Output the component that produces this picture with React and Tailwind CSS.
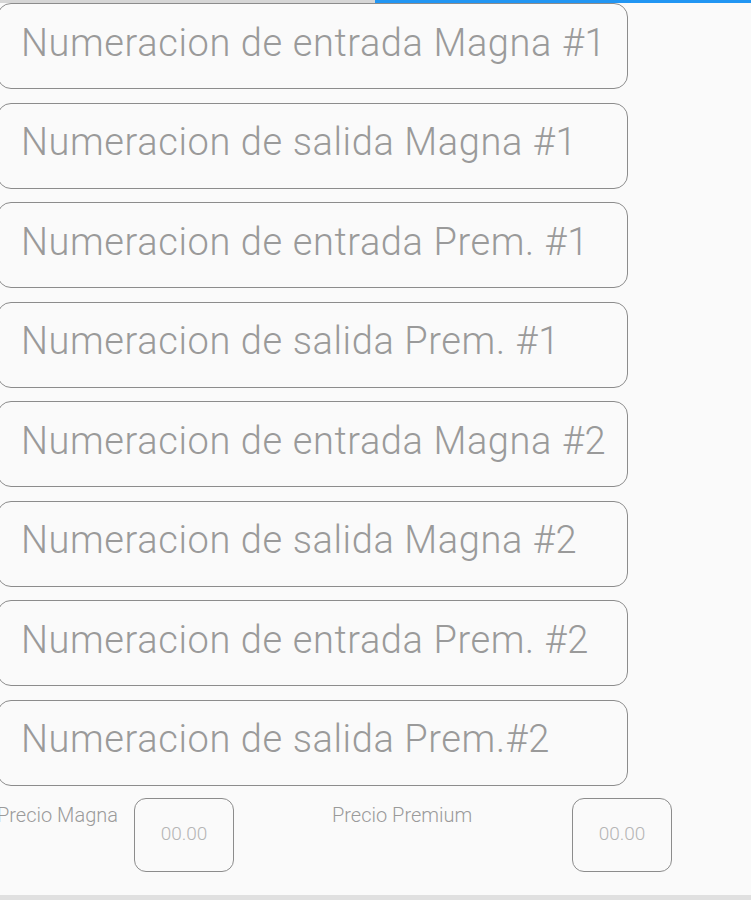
const campos = [
  'Numeracion de entrada Magna #1',
  'Numeracion de salida Magna #1',
  'Numeracion de entrada Prem. #1',
  'Numeracion de salida Prem. #1',
  'Numeracion de entrada Magna #2',
  'Numeracion de salida Magna #2',
  'Numeracion de entrada Prem. #2',
  'Numeracion de salida Prem.#2',
];

const App = () => {
  return (
    <div
      className="w-[751px] h-[900px] bg-[#fafafa] overflow-hidden flex flex-col"
      style={{ fontFamily: 'Roboto, "Open Sans", sans-serif' }}
    >
      {/* barra de progreso */}
      <div className="flex h-[3px] shrink-0">
        <div className="w-[375px] bg-[#d6d6d6]" />
        <div className="flex-1 bg-[#2196f3]" />
      </div>

      {/* lecturas */}
      <div className="flex flex-col gap-[13.5px] -ml-[3px]">
        {campos.map((campo) => (
          <div
            key={campo}
            className="w-[631px] h-[86px] border border-[#8c8c8c] rounded-[14px] flex items-center pl-[23px] pb-[7px]"
          >
            <span className="text-[38px] font-light text-[#9a9a9a] leading-none tracking-[0.6px]">
              {campo}
            </span>
          </div>
        ))}
      </div>

      {/* precios */}
      <div className="flex items-start mt-[12px] -ml-[3px]">
        <span className="text-[20px] font-light text-[#9a9a9a] mt-[2px] w-[137px] whitespace-nowrap">Precio Magna</span>
        <div className="w-[100px] h-[74px] border border-[#8c8c8c] rounded-[12px] flex items-center justify-center">
          <span className="text-[19px] font-light text-[#b5b5b5]">00.00</span>
        </div>
        <span className="text-[20px] font-light text-[#9a9a9a] mt-[2px] ml-[98px] w-[240px] whitespace-nowrap">Precio Premium</span>
        <div className="w-[100px] h-[74px] border border-[#8c8c8c] rounded-[12px] flex items-center justify-center">
          <span className="text-[19px] font-light text-[#b5b5b5]">00.00</span>
        </div>
      </div>

      <div className="flex-1" />
      <div className="h-[5px] bg-[#e0e0e0] shrink-0" />
    </div>
  );
};

export default App;
